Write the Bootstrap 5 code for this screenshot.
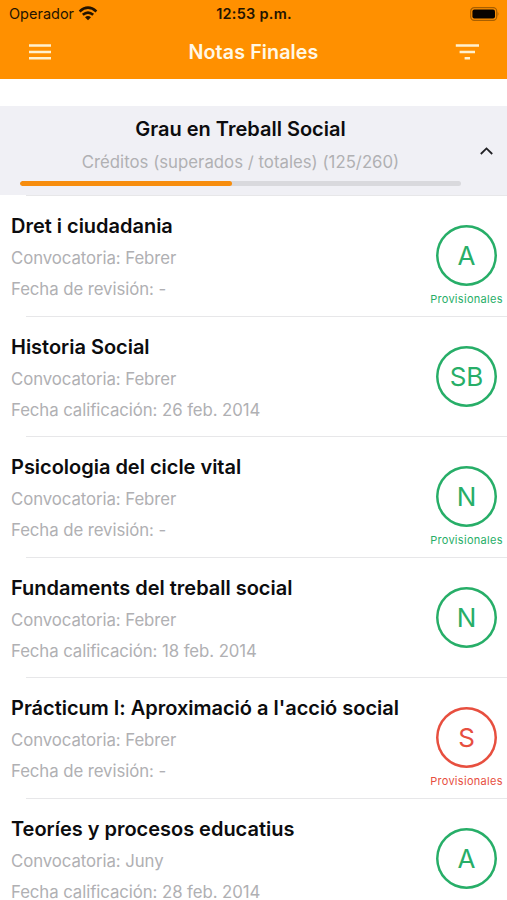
<!DOCTYPE html>
<html lang="es">
<head>
<meta charset="utf-8">
<meta name="viewport" content="width=device-width, initial-scale=1">
<title>Notas Finales</title>
<link href="https://cdn.jsdelivr.net/npm/bootstrap@5.3.0/dist/css/bootstrap.min.css" rel="stylesheet">
<style>
body{font-family:Inter,"Liberation Sans",sans-serif;color:#0c0c0e;background:#fff;height:900px;overflow:hidden}
svg{display:block;flex:none}
.topbar{background:#ff9000;height:79px}
.status{height:27px;font-size:14.5px;line-height:27px;color:#241400;padding:0 8px 0 9px}
.status-side{flex:1 1 0}
.clock{font-weight:600;font-size:14.5px;letter-spacing:.25px}
.titlebar{height:50px;padding:0 28px}
.titlebar h1{font-size:19.7px;font-weight:600;letter-spacing:.1px;line-height:50px;color:#fff8e6}
.degree{margin-top:27px;height:89px;background:#f0f0f5;padding:8px 13px 0 20px}
.degree-main{width:441px}
.degree h2{font-size:20px;font-weight:600;line-height:31px;letter-spacing:0}
.meta{font-size:16.8px;line-height:31px;color:#b0b0b3;letter-spacing:-.08px}
.credit-text{letter-spacing:0;line-height:32px;padding-top:1px}
.credits{height:5.5px;border-radius:3px;background:#d9d9dd;margin-top:2.5px}
.credits .progress-bar{background:#f78d0e;border-radius:3px}
.chevron{margin-top:32px}
.course{height:120.5px;padding:16px 0 0 11px;position:relative}
.course::before{content:"";position:absolute;left:26px;right:0;top:0;height:1px;background:#e7e7e9}
.course h3{font-size:20px;font-weight:600;line-height:31px;letter-spacing:-.02px;margin:0 0 1px}
.grade{width:81px;padding-top:14px;color:#27ae68}
.grade.fail{color:#e74f3f}
.ring{width:61px;height:61px;box-shadow:inset 0 0 0 2.5px currentColor;font-size:26px;line-height:1;padding-top:1px}
.note{font-size:11px;line-height:14px;margin-top:6px;letter-spacing:.3px}
</style>
<script src="https://cdn.jsdelivr.net/npm/bootstrap@5.3.0/dist/js/bootstrap.bundle.min.js"></script>
</head>
<body>
<header class="topbar">
  <div class="status d-flex align-items-center">
    <div class="status-side d-flex align-items-center">
      <span>Operador</span>
      <svg class="ms-1" width="20" height="15" viewBox="0 0 20 15" fill="none" stroke="#241400" stroke-width="2.6"><path d="M1.6 5.4Q10-2 18.4 5.4M4.8 8.8Q10 4.4 15.2 8.8"/><path d="M10 14.2L7 11.2Q10 8.8 13 11.2Z" fill="#241400" stroke="none"/></svg>
    </div>
    <span class="clock">12:53 p.m.</span>
    <div class="status-side d-flex justify-content-end">
      <svg width="30" height="14" viewBox="0 0 30 14"><rect x="1.7" y=".7" width="26" height="12.6" rx="3.6" fill="none" stroke="#a85f00" stroke-width="1.2"/><rect x="3.4" y="2.4" width="22.6" height="9.2" rx="2" fill="#080400"/><path d="M28.6 4.8Q30.4 7 28.6 9.2Z" fill="#a85f00"/></svg>
    </div>
  </div>
  <div class="titlebar d-flex align-items-center justify-content-between">
    <svg width="24" height="18" viewBox="0 0 24 18" stroke="#fff1d0" stroke-width="2.6"><path d="M1 2.5H23M1 9H23M1 15.2H23"/></svg>
    <h1 class="m-0">Notas Finales</h1>
    <svg width="24" height="18" viewBox="0 0 24 18" stroke="#fff1d0" stroke-width="2.6"><path d="M.8 2.5H24M4.6 9H20M9.6 15.2H15"/></svg>
  </div>
</header>
<main>
  <section class="degree d-flex justify-content-between">
    <div class="degree-main text-center">
      <h2 class="m-0">Grau en Treball Social</h2>
      <div class="meta credit-text">Créditos (superados / totales) (125/260)</div>
      <div class="progress credits"><div class="progress-bar" style="width:48%"></div></div>
    </div>
    <svg class="chevron" width="15" height="10" viewBox="0 0 15 10" fill="none" stroke="#202024" stroke-width="1.8"><path d="M1.8 8L7.5 2.4L13.2 8"/></svg>
  </section>
  <section>
    <article class="course d-flex justify-content-between">
      <div><h3>Dret i ciudadania</h3><div class="meta">Convocatoria: Febrer</div><div class="meta">Fecha de revisión: -</div></div>
      <div class="grade d-flex flex-column align-items-center"><div class="ring rounded-circle d-flex align-items-center justify-content-center">A</div><div class="note">Provisionales</div></div>
    </article>
    <article class="course d-flex justify-content-between">
      <div><h3>Historia Social</h3><div class="meta">Convocatoria: Febrer</div><div class="meta">Fecha calificación: 26 feb. 2014</div></div>
      <div class="grade d-flex flex-column align-items-center"><div class="ring rounded-circle d-flex align-items-center justify-content-center">SB</div></div>
    </article>
    <article class="course d-flex justify-content-between">
      <div><h3>Psicologia del cicle vital</h3><div class="meta">Convocatoria: Febrer</div><div class="meta">Fecha de revisión: -</div></div>
      <div class="grade d-flex flex-column align-items-center"><div class="ring rounded-circle d-flex align-items-center justify-content-center">N</div><div class="note">Provisionales</div></div>
    </article>
    <article class="course d-flex justify-content-between">
      <div><h3>Fundaments del treball social</h3><div class="meta">Convocatoria: Febrer</div><div class="meta">Fecha calificación: 18 feb. 2014</div></div>
      <div class="grade d-flex flex-column align-items-center"><div class="ring rounded-circle d-flex align-items-center justify-content-center">N</div></div>
    </article>
    <article class="course d-flex justify-content-between">
      <div><h3>Prácticum I: Aproximació a l'acció social</h3><div class="meta">Convocatoria: Febrer</div><div class="meta">Fecha de revisión: -</div></div>
      <div class="grade fail d-flex flex-column align-items-center"><div class="ring rounded-circle d-flex align-items-center justify-content-center">S</div><div class="note">Provisionales</div></div>
    </article>
    <article class="course d-flex justify-content-between">
      <div><h3>Teoríes y procesos educatius</h3><div class="meta">Convocatoria: Juny</div><div class="meta">Fecha calificación: 28 feb. 2014</div></div>
      <div class="grade d-flex flex-column align-items-center"><div class="ring rounded-circle d-flex align-items-center justify-content-center">A</div></div>
    </article>
  </section>
</main>
</body>
</html>
